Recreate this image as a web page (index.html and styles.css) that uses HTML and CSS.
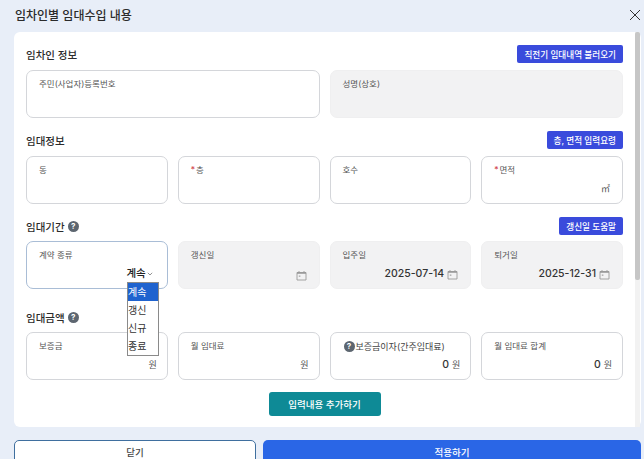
FILE: index.html
```html
<!DOCTYPE html>
<html lang="ko">
<head>
<meta charset="utf-8">
<title>임차인별 임대수입 내용</title>
<link rel="stylesheet" href="styles.css">
</head>
<body>
<svg class="defs" width="0" height="0" aria-hidden="true">
  <symbol id="cal" viewBox="0 0 11 11">
    <path d="M1 2.5h9v7.5H1z" fill="none" stroke="#9a9a9a" stroke-width=".9"/>
    <path d="M1 2h9v1.8H1z" fill="#9a9a9a"/>
    <path d="M3 1v1.5M8 1v1.5" stroke="#9a9a9a" stroke-width=".9"/>
    <rect x="2.8" y="5.4" width="1.6" height="1.6" fill="#b5b5b5"/>
  </symbol>
</svg>
<div class="modal">
  <header class="top">
    <h1 class="title">임차인별 임대수입 내용</h1>
    <button class="close" aria-label="닫기">
      <svg width="12" height="12" viewBox="0 0 12 12"><path d="M1 1l10 10M11 1L1 11" stroke="#333" stroke-width="1" fill="none"/></svg>
    </button>
  </header>
  <div class="sheet">
    <div class="content">
      <section class="group">
        <div class="head">
          <h2 class="sub">임차인 정보</h2>
          <button class="tag">직전기 임대내역 불러오기</button>
        </div>
        <div class="row two">
          <div class="field"><span class="label">주민(사업자)등록번호</span></div>
          <div class="field off"><span class="label">성명(상호)</span></div>
        </div>
      </section>
      <section class="group">
        <div class="head">
          <h2 class="sub">임대정보</h2>
          <button class="tag">층, 면적 입력요령</button>
        </div>
        <div class="row four">
          <div class="field"><span class="label">동</span></div>
          <div class="field"><span class="label"><i class="req">*</i>층</span></div>
          <div class="field"><span class="label">호수</span></div>
          <div class="field"><span class="label"><i class="req">*</i>면적</span><span class="val dated"><span class="unit">㎡</span></span></div>
        </div>
      </section>
      <section class="group">
        <div class="head tight">
          <h2 class="sub">임대기간 <i class="help">?</i></h2>
          <button class="tag">갱신일 도움말</button>
        </div>
        <div class="row four">
          <div class="field select">
            <span class="label">계약 종류</span>
            <span class="val pick">계속 <svg width="6" height="4" viewBox="0 0 6 4"><path d="M.8.8L3 3l2.2-2.2" fill="none" stroke="#777" stroke-width=".8"/></svg></span>
            <ul class="menu">
              <li class="on">계속</li>
              <li>갱신</li>
              <li>신규</li>
              <li>종료</li>
            </ul>
          </div>
          <div class="field off"><span class="label">갱신일</span><span class="val dated"><svg class="ico"><use href="#cal"/></svg></span></div>
          <div class="field off"><span class="label">입주일</span><span class="val dated"><b class="num">2025-07-14</b><svg class="ico"><use href="#cal"/></svg></span></div>
          <div class="field off"><span class="label">퇴거일</span><span class="val dated"><b class="num">2025-12-31</b><svg class="ico"><use href="#cal"/></svg></span></div>
        </div>
      </section>
      <section class="group money">
        <div class="head low">
          <h2 class="sub">임대금액 <i class="help">?</i></h2>
        </div>
        <div class="row four">
          <div class="field"><span class="label">보증금</span><span class="val"><span class="unit">원</span></span></div>
          <div class="field"><span class="label">월 임대료</span><span class="val"><span class="unit">원</span></span></div>
          <div class="field"><span class="label strong"><i class="help small">?</i>보증금이자(간주임대료)</span><span class="val"><b class="num">0</b><span class="unit">원</span></span></div>
          <div class="field"><span class="label">월 임대료 합계</span><span class="val"><b class="num">0</b><span class="unit">원</span></span></div>
        </div>
      </section>
      <div class="addline"><button class="add">입력내용 추가하기</button></div>
    </div>
    <div class="track"><div class="thumb"></div></div>
  </div>
  <footer class="foot">
    <button class="btn ghost">닫기</button>
    <button class="btn main">적용하기</button>
  </footer>
</div>
</body>
</html>
```
FILE: styles.css
```css
* { box-sizing: border-box; }
html, body { margin: 0; height: 459px; overflow: hidden; }
body { background: #e8eef8; font-family: Inter, "Noto Sans CJK KR", sans-serif; color: #333; }
button { font-family: inherit; border: 0; padding: 0; cursor: pointer; }
.defs { position: absolute; }
.modal { padding: 0 3px 0 14px; height: 459px; overflow: hidden; }
.top { height: 32px; display: flex; align-items: center; justify-content: space-between; padding-left: 1px; padding-bottom: 3px; }
.title { margin: 0; font-size: 12px; font-weight: 500; color: #2b2b2b; }
.close { background: none; width: 14px; height: 14px; margin-right: -1px; display: flex; align-items: center; justify-content: center; }
.sheet { height: 395px; background: #fff; border-radius: 6px; display: flex; padding-right: 1px; }
.content { flex: 1; padding: 13px 12px 0 12px; }
.track { width: 5px; background: #f2f2f2; }
.thumb { height: 248px; background: #c6c6c6; border-radius: 2px; }
.group { margin-bottom: 13px; }
.money { margin-bottom: 12px; }
.head { height: 18px; margin-bottom: 7px; display: flex; align-items: center; justify-content: space-between; }
.head.tight { margin-bottom: 6px; }
.head.low { margin-bottom: 6px; margin-top: 19px; }
.sub { margin: 0; font-size: 10.5px; font-weight: 500; color: #2b2b2b; display: flex; align-items: center; gap: 3px; }
.tag { height: 18px; padding: 0 7px; background: #3a4bdc; color: #fff; font-size: 8.6px; font-weight: 500; border-radius: 2px; white-space: nowrap; }
.help { display: inline-block; width: 11px; height: 11px; border-radius: 50%; background: #5d6670; color: #fff; font-size: 8px; font-style: normal; font-weight: 700; line-height: 11px; text-align: center; }
.help.small { margin-right: 1px; }
.row { display: grid; gap: 10px; }
.two { grid-template-columns: 1fr 1fr; }
.four { grid-template-columns: repeat(4, 1fr); }
.field { position: relative; height: 48px; border: 1px solid #d4d6da; border-radius: 7px; background: #fff; padding: 7px 10px 7px 12px; display: flex; flex-direction: column; justify-content: space-between; }
.field.off { background: #f2f2f3; border-color: #efeff0; }
.select { border-color: #a9bdd6; }
.label { font-size: 8.5px; color: #555; line-height: 13px; }
.label.strong { font-size: 9px; color: #444; display: flex; align-items: center; margin-left: 1px; }
.req { color: #d2474f; font-style: normal; margin-right: 1px; }
.val { display: flex; justify-content: flex-end; align-items: center; gap: 3px; font-size: 11px; line-height: 14px; color: #333; }
.dated { padding-right: 2px; }
.num { font-weight: 500; font-size: 10.5px; color: #333; }
.unit { font-size: 9px; color: #555; }
.ico { width: 11px; height: 11px; }
.pick { font-weight: 500; font-size: 10.5px; color: #222; padding-right: 4px; gap: 1px; }
.menu { position: absolute; z-index: 2; left: 100px; top: 40px; width: 32px; margin: 0; padding: 0; list-style: none; background: #fff; border: 1px solid #8a8a8a; }
.menu li { height: 18px; line-height: 18px; font-size: 10px; color: #333; white-space: nowrap; }
.menu .on { background: #1f63cf; color: #fff; }
.addline { display: flex; justify-content: center; }
.add { width: 112px; height: 24px; background: #0e8a96; color: #fff; font-size: 9.5px; font-weight: 500; border-radius: 3px; }
.foot { margin-top: 13px; display: flex; gap: 7px; }
.btn { height: 24px; border-radius: 5px 5px 0 0; font-size: 9.5px; font-weight: 500; }
.ghost { width: 242px; background: #fff; border: 1px solid #3f6f9f; color: #444; }
.main { flex: 1; background: #2a66e6; color: #fff; }
```
